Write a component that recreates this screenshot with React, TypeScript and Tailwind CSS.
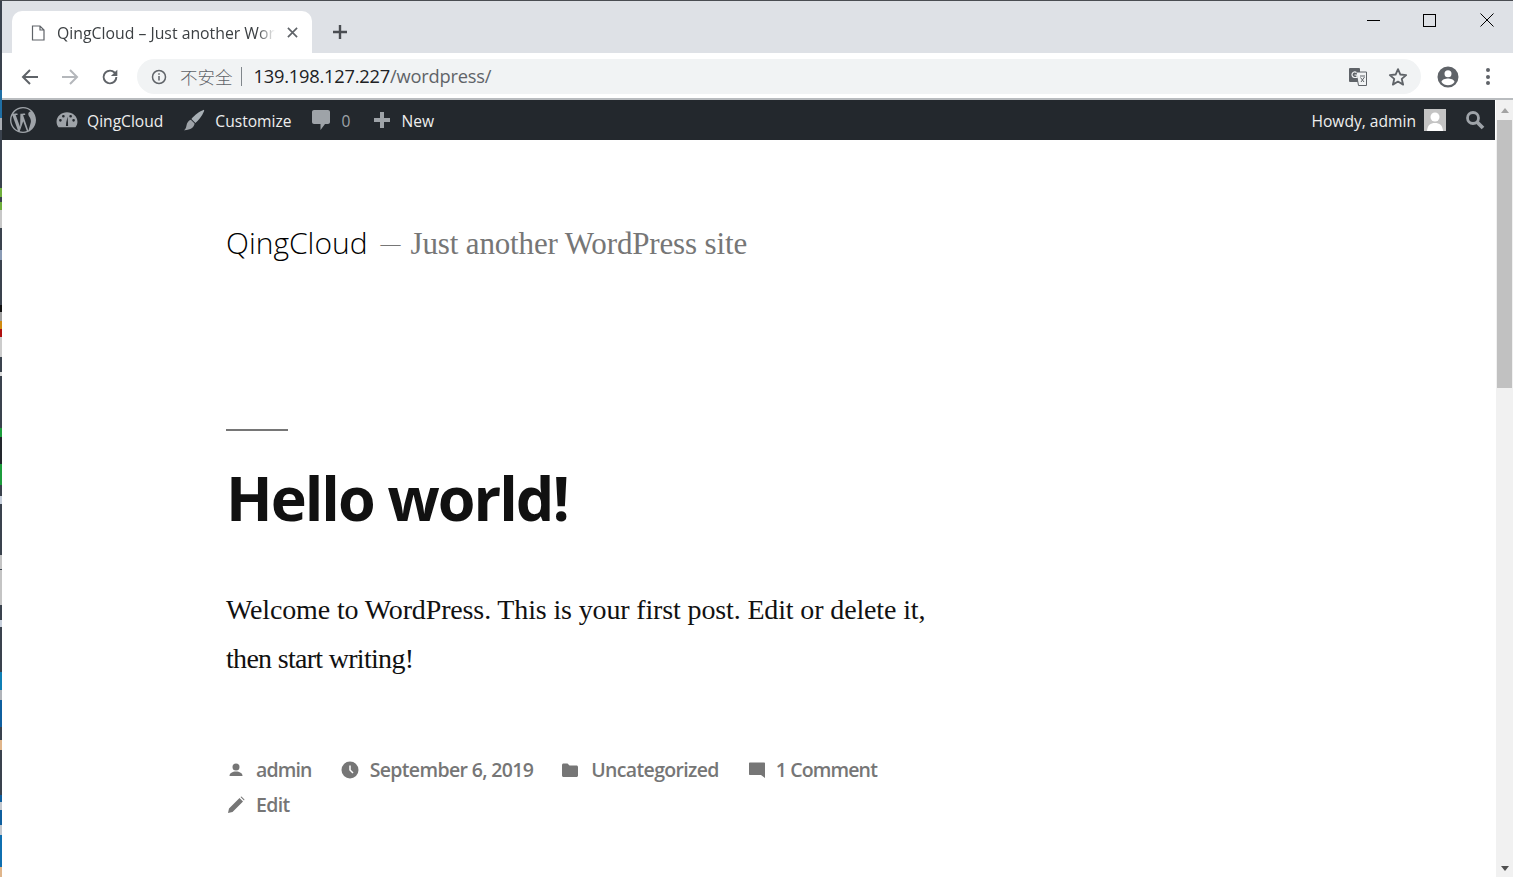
import { ReactNode } from 'react';

const ui = "font-['Open_Sans','Noto_Sans_CJK_SC',sans-serif]";

const stripColors = [
  'h-[89px] bg-[#3a424d]',
  'h-[28px] bg-[#1f6fa5]',
  'h-[12px] bg-[#a9adb3]',
  'h-[58px] bg-[#3a424d]',
  'h-[9px] bg-[#6fae3c]',
  'h-[5px] bg-[#3a424d]',
  'h-[8px] bg-[#6fae3c]',
  'h-[18px] bg-[#c8c8c8]',
  'h-[22px] bg-[#3a424d]',
  'h-[10px] bg-[#8a9bb5]',
  'h-[45px] bg-[#3a424d]',
  'h-[7px] bg-[#111111]',
  'h-[9px] bg-[#a0a0a0]',
  'h-[8px] bg-[#d08a10]',
  'h-[8px] bg-[#b01010]',
  'h-[20px] bg-[#cccccc]',
  'h-[15px] bg-[#3a424d]',
  'h-[4px] bg-[#dddddd]',
  'h-[52px] bg-[#3a424d]',
  'h-[9px] bg-[#1c9c3c]',
  'h-[27px] bg-[#22262c]',
  'h-[21px] bg-[#1c9c3c]',
  'h-[11px] bg-[#3a424d]',
  'h-[8px] bg-[#c8d0dc]',
  'h-[51px] bg-[#3a424d]',
  'h-[14px] bg-[#c4c4c4]',
  'h-px bg-[#3a424d]',
  'h-[35px] bg-[#c4c4c4]',
  'h-[15px] bg-[#3a424d]',
  'h-[7px] bg-[#c8d0dc]',
  'h-[45px] bg-[#3a424d]',
  'h-[18px] bg-[#0f7fb5]',
  'h-[10px] bg-[#b0b4ba]',
  'h-[27px] bg-[#0f5f9f]',
  'h-[13px] bg-[#3a424d]',
  'h-[10px] bg-[#e0b58a]',
  'h-[45px] bg-[#3a424d]',
  'h-[7px] bg-[#0f5f9f]',
  'h-[8px] bg-[#c4c8ce]',
  'h-[15px] bg-[#0f5f9f]',
  'h-[10px] bg-[#c4c8ce]',
  'h-[32px] bg-[#0f6fb0]',
  'h-[10px] bg-[#e0b58a]',
];

const WpLogo = () => (
  <svg viewBox="0 0 20 20" className="w-[26px] h-[26px] -mt-[3px] fill-[#9ea3a8]">
    <path d="M20 10c0-5.51-4.49-10-10-10C4.480 0 0 4.490 0 10c0 5.520 4.480 10 10 10 5.510 0 10-4.480 10-10zM7.780 15.370L4.370 6.220c.55-.02 1.170-.08 1.170-.08.5-.06.44-1.130-.06-1.110 0 0-1.450.11-2.370.11-.18 0-.37 0-.58-.01C4.120 2.690 6.890 1.050 10 1.050c2.320 0 4.430.89 6.010 2.340-.03-.01-.07-.01-.1-.01-1.080 0-1.850.94-1.850 1.950 0 .91.53 1.680 1.090 2.590.42.740.91 1.680.91 3.050 0 .94-.36 2.040-.84 3.560l-1.100 3.680-4.020-11.950c.67-.04 1.270-.11 1.270-.11.6-.08.53-1.150-.07-1.110 0 0-1.800.14-2.960.14-.11 0-.23 0-.36-.01zM10.170 10.900l2.710 7.430c.02.04.04.09.07.12-.92.32-1.910.5-2.950.5-.87 0-1.710-.13-2.510-.36zM1.050 10c0-1.290.28-2.530.78-3.640l4.270 11.680C3.110 16.590 1.050 13.540 1.050 10zM17.300 5.760c.41.75.65 1.620.65 2.540 0 .95-.18 1.780-.64 3.010l-2.810 7.790c2.700-1.550 4.450-4.500 4.450-8.100 0-1.240-.28-2.270-.65-3.240z" />
  </svg>
);

const Dashboard = () => (
  <svg viewBox="0 0 20 20" className="w-[22px] h-[22px] -mt-[2px] fill-[#9ea3a8]">
    <path d="M10 3c-5 0-9.500 3.700-9.500 8.500 0 1.900.7 3.600 1.800 5h15.400c1.100-1.400 1.800-3.100 1.800-5C19.500 6.700 15 3 10 3zM4 11.500a1.200 1.200 0 110-2.400 1.200 1.200 0 010 2.400zm2.700-3.700a1.200 1.200 0 110-2.400 1.200 1.200 0 010 2.400zm4.300 7.700H9l.3-3.200L10.500 7l.4 5.300.1 3.200zm2.300-7.700a1.200 1.200 0 110-2.400 1.200 1.200 0 010 2.400zm2.700 3.700a1.200 1.200 0 110-2.400 1.200 1.200 0 010 2.400z" />
  </svg>
);

const Brush = () => (
  <svg viewBox="0 0 22 22" className="w-[22px] h-[22px] -mt-[2px]">
    <path d="M21 .8c.3.300.2 1-.1 1.700-2 4.700-5.300 9-8.500 11.500L8.400 10C11.500 6.300 16.500 2.300 21 .8z" fill="#a8b0b5" />
    <path d="M7.800 10.800l3.800 3.800c-.3 3.700-4.300 6.800-10.600 6.600 1.900-1.300 2.100-2.900 2.500-4.800.4-2.500 2-4.800 4.300-5.600z" fill="#9ea3a8" />
  </svg>
);

const Bubble = () => (
  <svg viewBox="0 0 18 20" className="w-[18px] h-[20px] -mt-[2px] fill-[#9ea3a8]">
    <path d="M2 0h14c1.100 0 2 .9 2 2v10c0 1.100-.9 2-2 2h-3l-4.500 6v-6H2c-1.100 0-2-.9-2-2V2C0 .9.900 0 2 0z" />
  </svg>
);

const Plus = () => (
  <svg viewBox="0 0 18 18" className="w-[18px] h-[18px] -mt-[2px] fill-[#9ea3a8]">
    <path d="M7 1h4v6h6v4h-6v6H7v-6H1V7h6z" />
  </svg>
);

const Omnibox = () => (
  <div className="flex-1 h-[35px] bg-[#f1f3f4] rounded-full flex items-center pl-[14px] pr-[12px] ml-[16px]">
    <svg viewBox="0 0 16 16" className="w-[16px] h-[16px] fill-none stroke-[#5f6368]" strokeWidth="1.500">
      <circle cx="8" cy="8" r="6.500" />
      <path d="M8 7v4.500M8 4.200v1.600" />
    </svg>
    <span className="ml-[13px] text-[17.500px] text-[#5f6368] leading-none font-['Noto_Sans_CJK_SC',sans-serif] font-light">不安全</span>
    <span className="ml-[8px] w-px h-[19px] bg-[#80868b]" />
    <span className={`ml-[12px] text-[18.300px] leading-none tracking-[-0.22px] ${ui}`}>
      <span className="text-[#202124]">139.198.127.227</span>
      <span className="text-[#5f6368]">/wordpress/</span>
    </span>
    <div className="ml-auto flex items-center gap-[19px]">
      <svg viewBox="0 0 20 20" className="w-[20px] h-[20px]">
        <rect x="1" y="1" width="11" height="14" rx="1" fill="#5f6368" />
        <path d="M8 5h10.500v13.500H10.500z" fill="#f1f3f4" stroke="#5f6368" strokeWidth="1" />
        <path d="M12 9h5M13 15l3.500-5M12.500 10.500l3.500 4.500" stroke="#5f6368" strokeWidth="1" fill="none" />
        <path d="M8.500 5.500A2.800 2.800 0 106.500 10.500H9V8H6.500" stroke="#f1f3f4" strokeWidth="1.200" fill="none" />
      </svg>
      <svg viewBox="0 0 24 24" className="w-[22px] h-[22px] fill-none stroke-[#5f6368]" strokeWidth="2">
        <path d="M12 3.500l2.600 5.800 6.300.6-4.800 4.200 1.500 6.200L12 17l-5.600 3.300 1.500-6.200L3.100 9.900l6.300-.6z" strokeLinejoin="round" />
      </svg>
    </div>
  </div>
);

const AdminItem = ({ icon, children, className }: { icon: ReactNode; children: ReactNode; className: string }) => (
  <div className={`flex items-center ${className}`}>
    {icon}
    {children}
  </div>
);

const Meta = ({ icon, children, className }: { icon: ReactNode; children: ReactNode; className?: string }) => (
  <div className={`flex items-center ${className ?? ''}`}>
    <span className="w-[20px] h-[20px] flex items-center justify-center">{icon}</span>
    {children}
  </div>
);

export default function App() {
  return (
    <div className="w-[1513px] h-[877px] overflow-hidden bg-white flex flex-col">
      <div className="h-px bg-[#4a4d52]" />
      <div className="flex flex-1 min-h-0">
        <div className="w-[2px] bg-[#3a424d] flex flex-col overflow-hidden">
          {stripColors.map((c, i) => (
            <div key={i} className={`shrink-0 ${c}`} />
          ))}
        </div>

        <div className="flex-1 min-w-0 flex flex-col">
          {/* Tab strip */}
          <div className="h-[52px] bg-[#dee1e6] flex items-end pl-[10px]">
            <div className="w-[300px] h-[42px] bg-white rounded-t-[10px] flex items-center pl-[19px] pr-[14px]">
              <svg viewBox="0 0 14 16" className="w-[14px] h-[16px] mt-[2px] fill-none stroke-[#5f6368] shrink-0" strokeWidth="1.200">
                <path d="M1.500 1h7.500l4 4v10h-11.500zM9 1v4h4" />
              </svg>
              <span className={`ml-[12px] mt-[3px] text-[15.800px] text-[#3c4043] whitespace-nowrap [mask-image:linear-gradient(to_right,black_92%,transparent)] ${ui}`}>
                QingCloud – Just another Wor
              </span>
              <svg viewBox="0 0 12 12" className="ml-auto w-[11px] h-[11px] stroke-[#5f6368] fill-none" strokeWidth="1.800">
                <path d="M1 1l10 10M11 1L1 11" />
              </svg>
            </div>
            <svg viewBox="0 0 16 16" className="w-[16px] h-[16px] stroke-[#4a4d52] ml-[20px] mb-[13px]" strokeWidth="2.400">
              <path d="M8 1v14M1 8h14" />
            </svg>
            <div className="ml-auto self-start flex items-center h-[38px] pr-[19px] gap-[43px]">
              <div className="w-[13px] h-px bg-black" />
              <div className="w-[13px] h-[13px] border border-black" />
              <svg viewBox="0 0 14 14" className="ml-px w-[14px] h-[14px] stroke-black fill-none" strokeWidth="1">
                <path d="M.500.500l13 13M13.500.500l-13 13" />
              </svg>
            </div>
          </div>

          {/* Toolbar */}
          <div className="h-[45px] bg-white flex items-center pt-[2px] pl-[19px] pr-[23px]">
            <svg viewBox="0 0 18 18" className="w-[18px] h-[18px] stroke-[#5f6368] fill-none" strokeWidth="2">
              <path d="M17 9H2M9 2L2 9l7 7" />
            </svg>
            <svg viewBox="0 0 18 18" className="w-[18px] h-[18px] ml-[22px] stroke-[#b4b7bb] fill-none" strokeWidth="2">
              <path d="M1 9h15M9 2l7 7-7 7" />
            </svg>
            <svg viewBox="0 0 24 24" className="w-[22px] h-[22px] ml-[20px] fill-[#5f6368]">
              <path d="M17.650 6.350A7.960 7.960 0 0012 4a8 8 0 108 8h-2.100a5.900 5.900 0 11-1.740-4.160L13 11h7V4z" />
            </svg>
            <Omnibox />
            <svg viewBox="0 0 24 24" className="w-[24px] h-[24px] ml-[15px] fill-[#5f6368]">
              <path d="M12 1.500a10.500 10.500 0 100 21 10.500 10.500 0 000-21zm0 3.700a3.500 3.500 0 110 7 3.500 3.500 0 010-7zm0 15a8.200 8.200 0 01-6.500-3.300c.1-2.100 4.300-3.300 6.500-3.300s6.400 1.200 6.500 3.300a8.200 8.200 0 01-6.500 3.300z" />
            </svg>
            <div className="ml-[26px] flex flex-col gap-[2.500px]">
              <span className="w-[4px] h-[4px] rounded-full bg-[#5f6368]" />
              <span className="w-[4px] h-[4px] rounded-full bg-[#5f6368]" />
              <span className="w-[4px] h-[4px] rounded-full bg-[#5f6368]" />
            </div>
          </div>
          <div className="h-[2px] bg-[#b9bcbf]" />

          {/* Page */}
          <div className="flex-1 min-h-0 flex">
            <div className="flex-1 min-w-0 flex flex-col">
              <div className={`h-[40px] bg-[#23282d] flex items-center pt-[3px] pl-[8px] pr-[10px] text-[#eeeeee] text-[15.600px] ${ui}`}>
                <WpLogo />
                <AdminItem icon={<Dashboard />} className="ml-[20px] gap-[9px]">QingCloud</AdminItem>
                <AdminItem icon={<Brush />} className="ml-[20px] gap-[10px]">Customize</AdminItem>
                <AdminItem icon={<Bubble />} className="ml-[20px] gap-[12px]"><span className="text-[#9ea3a8]">0</span></AdminItem>
                <AdminItem icon={<Plus />} className="ml-[23px] gap-[10px]">New</AdminItem>
                <div className="ml-auto flex items-center gap-[8px]">
                  <span>Howdy, admin</span>
                  <div className="w-[22px] h-[22px] -mt-[3px] bg-[#c4c4c4] flex items-end justify-center overflow-hidden">
                    <svg viewBox="0 0 22 22" className="w-[22px] h-[22px] fill-white">
                      <circle cx="11" cy="8" r="4.500" />
                      <path d="M3 22c.5-6 3.500-8 8-8s7.500 2 8 8z" />
                    </svg>
                  </div>
                  <svg viewBox="0 0 20 20" className="ml-[11px] -mt-[3px] w-[20px] h-[20px] fill-none stroke-[#9ea3a8]">
                    <circle cx="8" cy="8" r="5.500" strokeWidth="2.800" />
                    <path d="M12 12l6 6" strokeWidth="3.800" />
                  </svg>
                </div>
              </div>

              <div className="pl-[224px] pt-[80px]">
                <div className="flex items-baseline h-[42px]">
                  <span className={`text-[30px] text-black font-light ${ui}`}>QingCloud</span>
                  <span className="ml-[13px] text-[20px] text-[#767676] -translate-y-[3px] font-['Liberation_Serif',serif]">—</span>
                  <span className="ml-[10px] text-[31px] text-[#767676] font-['Liberation_Serif',serif] tracking-[-0.15px]">Just another WordPress site</span>
                </div>

                <div className="w-[62px] h-[2px] bg-[#767676] mt-[167px]" />

                <h1 className={`mt-[22px] text-[61px] leading-[90px] font-bold text-[#111111] tracking-[-2px] ${ui}`}>Hello world!</h1>

                <div className="mt-[42px] w-[730px] text-[28px] leading-[49px] text-[#111111] font-['Liberation_Serif',serif]">
                  <p className="tracking-[-0.14px]">Welcome to WordPress. This is your first post. Edit or delete it,</p>
                  <p className="tracking-[-0.7px]">then start writing!</p>
                </div>

                <div className={`mt-[69px] text-[19.500px] leading-[35px] font-semibold text-[#767676] tracking-[-0.65px] ${ui}`}>
                  <div className="flex items-center">
                    <Meta icon={<svg viewBox="0 0 16 16" className="w-[16px] h-[16px] fill-[#767676]"><circle cx="8" cy="5" r="3.500" /><path d="M1.500 14c0-3 3-4.500 6.500-4.500s6.500 1.500 6.500 4.500z" /></svg>}>
                      <span className="ml-[10px] tracking-[-0.85px]">admin</span>
                    </Meta>
                    <Meta className="ml-[28px]" icon={<svg viewBox="0 0 18 18" className="w-[18px] h-[18px]"><circle cx="9" cy="9" r="8.500" fill="#767676" /><path d="M9 4.500V9l3 3" stroke="#fff" strokeWidth="1.500" fill="none" /></svg>}>
                      <span className="ml-[10px]">September 6, 2019</span>
                    </Meta>
                    <Meta className="ml-[27px]" icon={<svg viewBox="0 0 18 16" className="w-[18px] h-[16px] fill-[#767676]"><path d="M1 3c0-.8.7-1.500 1.500-1.500h4L8.500 3.500h7c.8 0 1.500.7 1.500 1.500v8.500c0 .8-.7 1.500-1.500 1.500h-13C1.700 15 1 14.300 1 13.500z" /></svg>}>
                      <span className="ml-[11px]">Uncategorized</span>
                    </Meta>
                    <Meta className="ml-[28px]" icon={<svg viewBox="0 0 18 18" className="w-[18px] h-[18px] fill-[#767676]"><path d="M2 1.500h14c.6 0 1 .4 1 1V17l-4-3H2c-.6 0-1-.4-1-1V2.500c0-.6.4-1 1-1z" /></svg>}>
                      <span className="ml-[9px] tracking-[-0.88px]">1 Comment</span>
                    </Meta>
                  </div>
                  <Meta icon={<svg viewBox="0 0 18 18" className="w-[18px] h-[18px] fill-[#767676]"><path d="M1 17l1-4.500L12.500 2l3.500 3.500L5.500 16zM13.500 1l1-.5 3 3-.5 1z" /></svg>}>
                    <span className="ml-[10px]">Edit</span>
                  </Meta>
                </div>
              </div>
            </div>

            {/* Scrollbar */}
            <div className="w-[17px] ml-px bg-[#f1f1f1] flex flex-col items-stretch">
              <div className="h-[20px] flex items-center justify-center">
                <div className="w-0 h-0 border-x-[4px] border-x-transparent border-b-[5px] border-b-[#a3a3a3]" />
              </div>
              <div className="h-[268px] mx-px bg-[#c1c1c1]" />
              <div className="mt-auto h-[17px] flex items-center justify-center">
                <div className="w-0 h-0 border-x-[4px] border-x-transparent border-t-[5px] border-t-[#505050]" />
              </div>
            </div>
          </div>
        </div>
      </div>
    </div>
  );
}
